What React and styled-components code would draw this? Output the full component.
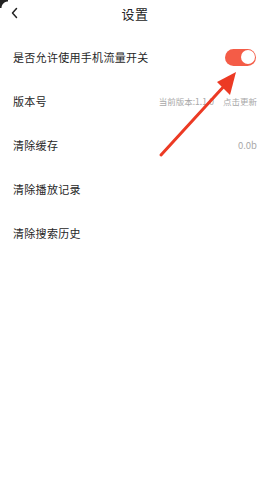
import React from "react";
import styled, { createGlobalStyle } from "styled-components";

const Global = createGlobalStyle`
  html, body { margin: 0; padding: 0; background: #fff; }
  body { font-family: "Noto Sans CJK SC", "Noto Sans", sans-serif; }
`;

const Page = styled.div`
  position: relative;
  width: 270px;
  height: 480px;
  background: #fff;
  overflow: hidden;
`;

const Header = styled.div`
  height: 26px;
  display: flex;
  align-items: center;
  justify-content: center;
  position: relative;
`;

const Back = styled.svg`
  position: absolute;
  left: 10px;
  top: 7px;
`;

const Title = styled.div`
  font-size: 13px;
  color: #222;
  letter-spacing: 0.5px;
`;

const List = styled.div`
  padding-top: 9px;
  display: flex;
  flex-direction: column;
`;

const Row = styled.div`
  height: 44px;
  display: flex;
  align-items: center;
  justify-content: space-between;
  padding: 0 13px 0 13px;
`;

const Label = styled.div`
  font-size: 11px;
  color: #262626;
  letter-spacing: 0.3px;
`;

const Side = styled.div`
  display: flex;
  align-items: center;
  gap: ${(p) => p.$gap || 0}px;
  font-size: ${(p) => p.$size || 8.5}px;
  color: #a8a8a8;
`;

const Toggle = styled.div`
  width: 31px;
  height: 17px;
  border-radius: 9px;
  background: #f45c47;
  position: relative;
  margin-right: 1px;
`;

const Knob = styled.div`
  position: absolute;
  right: 1.5px;
  top: 1.5px;
  width: 14px;
  height: 14px;
  border-radius: 50%;
  background: #fff;
`;

const Arrow = styled.svg`
  position: absolute;
  left: 0;
  top: 0;
  pointer-events: none;
`;

const Corner = styled.div`
  position: absolute;
  left: 0;
  top: 0;
  width: 8px;
  height: 8px;
  background: radial-gradient(circle at 8px 8px, transparent 6px, #222 7px);
`;

export default function App() {
  return (
    <Page>
      <Global />
      <Header>
        <Back width="9" height="12" viewBox="0 0 9 12">
          <path d="M6.5 1.5 L2.5 6 L6.5 10.5" fill="none" stroke="#222" strokeWidth="1.5" strokeLinecap="round" strokeLinejoin="round" />
        </Back>
        <Title>设置</Title>
      </Header>
      <List>
        <Row>
          <Label>是否允许使用手机流量开关</Label>
          <Toggle><Knob /></Toggle>
        </Row>
        <Row>
          <Label>版本号</Label>
          <Side $gap={9}>
            <span>当前版本:1.1.0</span>
            <span>点击更新</span>
          </Side>
        </Row>
        <Row>
          <Label>清除缓存</Label>
          <Side $size={9.5}>0.0b</Side>
        </Row>
        <Row>
          <Label>清除播放记录</Label>
        </Row>
        <Row>
          <Label>清除搜索历史</Label>
        </Row>
      </List>
      <Arrow width="270" height="480" viewBox="0 0 270 480">
        <line x1="161" y1="155" x2="226" y2="84" stroke="#ec3a24" strokeWidth="3" strokeLinecap="round" />
        <polygon points="236,72 217,82 230,95" fill="#ec3a24" />
      </Arrow>
      <Corner />
    </Page>
  );
}
